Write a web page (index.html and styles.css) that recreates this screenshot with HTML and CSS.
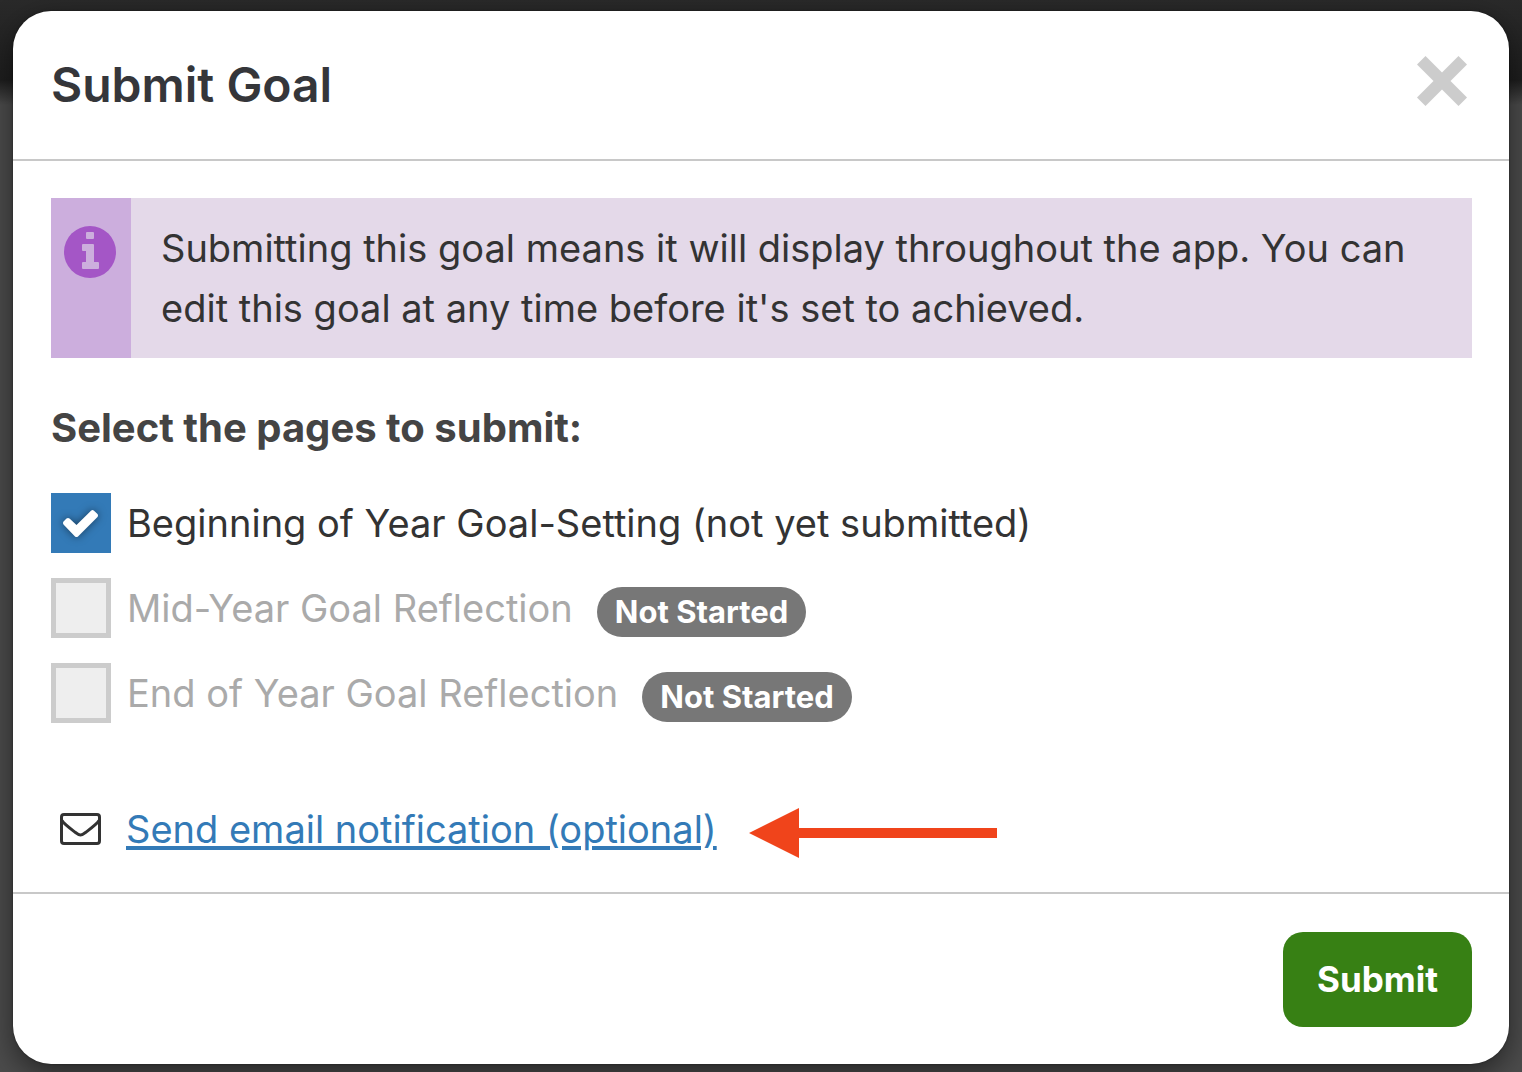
FILE: index.html
```html
<!DOCTYPE html>
<html lang="en">
<head>
    <meta charset="UTF-8">
    <meta name="viewport" content="width=device-width, initial-scale=1.0">
    <title>Submit Goal</title>
    <link rel="stylesheet" href="styles.css">
</head>
<body>

<form class="modal" role="dialog" aria-labelledby="modalTitle">
    <div class="modal-header">
        <h1 class="modal-title" id="modalTitle">Submit Goal</h1>
        <button type="button" class="close" aria-label="Close">
            <svg width="50" height="50" viewBox="0 0 50 50" aria-hidden="true">
                <path d="M8.5 0 L25 16.500 L41.500 0 L50 8.500 L33.500 25 L50 41.500 L41.500 50 L25 33.500 L8.500 50 L0 41.500 L16.500 25 L0 8.500 Z" fill="#ccc"/>
            </svg>
        </button>
    </div>

    <div class="modal-body">
        <div class="info">
            <div class="info-icon">
                <svg width="52" height="52" viewBox="0 0 52 52" aria-hidden="true">
                    <circle cx="26" cy="26" r="26" fill="#a456c6"/>
                    <path d="M23 6 H29 Q30 6 30 7 V12 Q30 13 29 13 H23 Q22 13 22 12 V7 Q22 6 23 6 Z M19 18 H29 Q30 18 30 19 V36 H34 Q35 36 35 37 V42 Q35 43 34 43 H19 Q18 43 18 42 V37 Q18 36 19 36 H22 V25 H19 Q18 25 18 24 V19 Q18 18 19 18 Z" fill="#ccaedd"/>
                </svg>
            </div>
            <p class="info-text">Submitting this goal means it will display throughout the app. You can edit this goal at any time before it's set to achieved.</p>
        </div>

        <h2 class="pages-title">Select the pages to submit:</h2>

        <!-- Pages -->
        <ul class="pages">
            <li class="page-row">
                <span class="check">
                    <input type="checkbox" id="pageBeginning" checked>
                    <svg class="tick" viewBox="0 0 60 60" aria-hidden="true">
                        <path d="M12.500 28.500 L15.500 25.500 Q17 24.500 18.500 25.500 L25.500 32 L40 17.700 Q41.500 16.500 43 17.700 L46.500 21 Q47.500 22.500 46.500 24 L27 43.500 Q25.500 44.500 24 43.500 L12.500 31.500 Q11.500 30 12.500 28.500 Z" fill="#fff"/>
                    </svg>
                </span>
                <label for="pageBeginning">Beginning of Year Goal-Setting (not yet submitted)</label>
            </li>
            <li class="page-row disabled">
                <span class="check"><input type="checkbox" id="pageMid" disabled></span>
                <label for="pageMid">Mid-Year Goal Reflection</label>
                <span class="badge">Not Started</span>
            </li>
            <li class="page-row disabled">
                <span class="check"><input type="checkbox" id="pageEnd" disabled></span>
                <label for="pageEnd">End of Year Goal Reflection</label>
                <span class="badge">Not Started</span>
            </li>
        </ul>

        <!-- Email notification -->
        <div class="email">
            <span class="email-icon">
                <svg width="42" height="34" viewBox="0 0 42 34" aria-hidden="true">
                    <g fill="none" stroke="#333" stroke-width="3">
                        <rect x="2.500" y="2.500" width="38" height="29" rx="2.500"/>
                        <path d="M3 8.500 C5 12 12 17 16.500 20.500 C18.500 22 20 23 21.500 23 C23 23 24.500 22 26.500 20.500 C31 17 38 12 40 8.500"/>
                    </g>
                </svg>
            </span>
            <a href="#" class="email-link">Send email notification (optional)</a>
            <svg class="arrow" width="248" height="50" viewBox="0 0 248 50" aria-hidden="true">
                <path d="M0 25 L50 0 V20 H248 V30 H50 V50 Z" fill="#f0441b"/>
            </svg>
        </div>
    </div>

    <div class="modal-footer">
        <button type="submit" class="submit">Submit</button>
    </div>
</form>

</body>
</html>
```
FILE: styles.css
```css
* {
    box-sizing: border-box;
}
body {
    margin: 0;
    padding: 11px 13px 8px;
    font-family: Inter, "Liberation Sans", sans-serif;
    font-size: 38px;
    line-height: 60px;
    color: #333;
    background: linear-gradient(#2a2a2a 0, #1e1e1e 80px, #4c4c4c 105px, #4c4c4c 100%);
}
h1, h2, p, ul {
    margin: 0;
    padding: 0;
}
button {
    font-family: inherit;
    border: none;
    cursor: pointer;
}
svg {
    display: block;
}
.modal {
    background-color: #fff;
    border-radius: 38px;
    box-shadow: 0 0 2px rgba(0, 0, 0, 0.5), 0 10px 30px rgba(0, 0, 0, 0.5);
}
.modal-header {
    display: flex;
    justify-content: space-between;
    align-items: center;
    padding: 38px 42px 38px 38px;
    border-bottom: 2px solid #c8c8c8;
}
.modal-title {
    font-size: 48px;
    line-height: 72px;
    font-weight: 600;
    color: #35363a;
}
.close {
    padding: 0 0 8px;
    background: none;
}
.modal-body {
    padding: 37px 37px 33px 38px;
}
.info {
    display: flex;
    background-color: #e4d9e9;
}
.info-icon {
    flex: none;
    width: 80px;
    padding: 28px 13px;
    background-color: #ccaedd;
}
.info-text {
    padding: 20px 30px;
}
.pages-title {
    margin-top: 40px;
    font-size: 40px;
    font-weight: 700;
    color: #444;
}
.pages {
    display: flex;
    flex-direction: column;
    gap: 25px;
    margin-top: 35px;
    list-style: none;
}
.page-row {
    display: flex;
    align-items: center;
    gap: 16px;
}
.disabled {
    color: #aaa;
}
.check {
    position: relative;
    flex: none;
    width: 60px;
    height: 60px;
}
.check input {
    appearance: none;
    display: block;
    width: 60px;
    height: 60px;
    margin: 0;
    border: 5px solid #ccc;
    background-color: #eee;
}
.check input:checked {
    border-color: #337ab7;
    background-color: #337ab7;
}
.tick {
    position: absolute;
    inset: 0;
    pointer-events: none;
    filter: drop-shadow(0 0 4px rgba(0, 0, 0, 0.5));
}
.badge {
    margin: 8px 0 0 8px;
    padding: 0 18px;
    border-radius: 25px;
    font-size: 31px;
    line-height: 50px;
    font-weight: 700;
    color: #fff;
    background-color: #777;
}
.email {
    display: flex;
    align-items: center;
    margin-top: 76px;
}
.email-icon {
    flex: none;
    width: 75px;
    padding-left: 8px;
}
.email-link {
    color: #337ab7;
    text-decoration-thickness: 4px;
    text-underline-offset: 3px;
}
.arrow {
    margin: 8px 0 0 32px;
}
.modal-footer {
    display: flex;
    justify-content: flex-end;
    padding: 38px 37px 37px;
    border-top: 2px solid #c8c8c8;
}
.submit {
    padding: 0 34px;
    border-radius: 20px;
    font-size: 35px;
    line-height: 95px;
    font-weight: 700;
    color: #fff;
    background-color: #378014;
}
.submit:hover {
    background-color: #2e6c11;
}
```
